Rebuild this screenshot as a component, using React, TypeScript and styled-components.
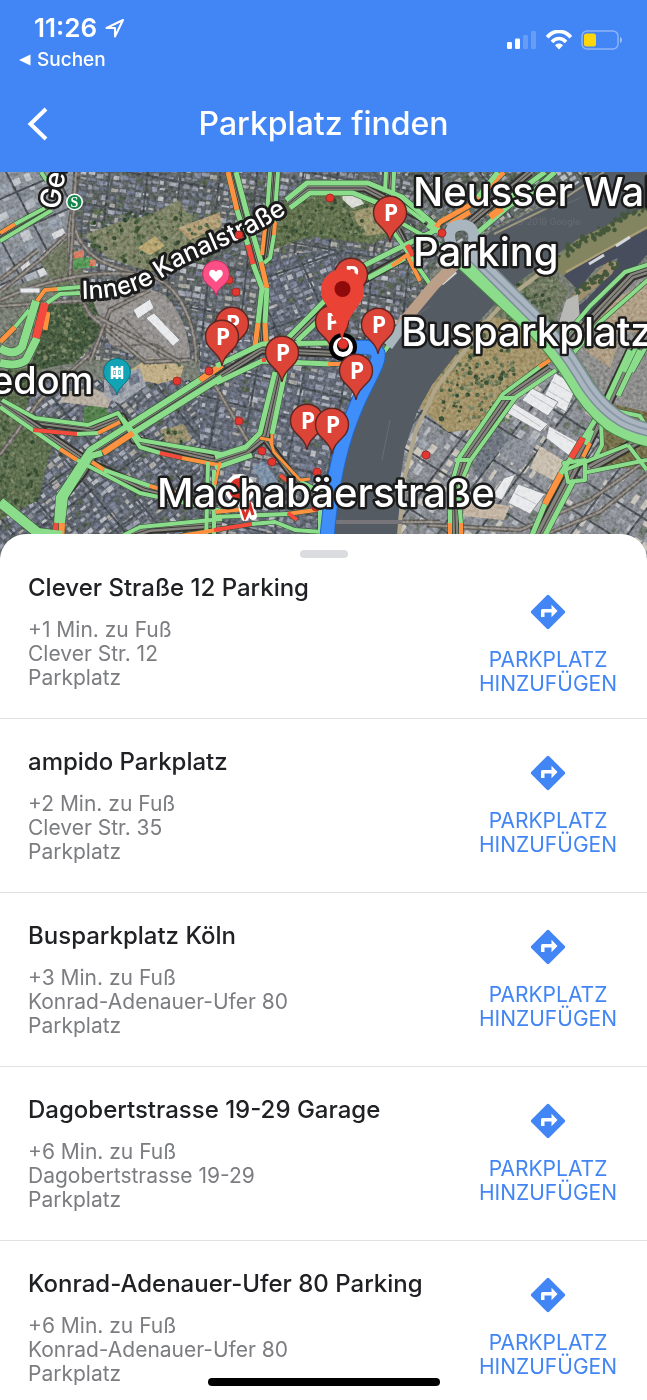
import React from "react";
import styled, { createGlobalStyle } from "styled-components";

const GlobalStyle = createGlobalStyle`
  *, *::before, *::after { box-sizing: border-box; }
  body {
    margin: 0;
    background: #ffffff;
    font-family: Inter, "Liberation Sans", sans-serif;
  }
`;

const Screen = styled.div`
  display: flex;
  flex-direction: column;
  height: 100vh;
  overflow: hidden;
  position: relative;
`;

const Header = styled.header`
  flex: none;
  background: #4285f4;
  color: #ffffff;
`;

const StatusBar = styled.div`
  display: flex;
  justify-content: space-between;
  height: 76px;
  padding: 12px 24px 0 19px;
`;

const StatusLeft = styled.div`
  display: flex;
  flex-direction: column;
  gap: 4px;
`;

const Clock = styled.div`
  display: flex;
  align-items: center;
  gap: 8px;
  padding-left: 15px;
  font-size: 26px;
  line-height: 32px;
  font-weight: 600;
`;

const ReturnLink = styled.a`
  display: flex;
  align-items: center;
  gap: 6px;
  color: inherit;
  font-size: 19px;
  line-height: 24px;
  font-weight: 500;
  text-decoration: none;
`;

const StatusRight = styled.div`
  display: flex;
  align-items: center;
  gap: 8px;
  height: 56px;
`;

const NavBar = styled.div`
  display: grid;
  grid-template-columns: 76px 1fr 76px;
  align-items: center;
  height: 96px;
`;

const BackButton = styled.button`
  display: flex;
  align-items: center;
  height: 56px;
  padding: 0 0 0 27px;
  border: 0;
  background: none;
  color: inherit;
`;

const Title = styled.h1`
  margin: 0;
  font-size: 32px;
  line-height: 40px;
  font-weight: 500;
  text-align: center;
`;

const MapArea = styled.div`
  flex: none;
  height: 388px;
  background: #6a6e70;

  svg {
    display: block;
    width: 100%;
    height: 100%;
  }
`;

const Sheet = styled.main`
  position: relative;
  display: flex;
  flex-direction: column;
  flex: 1;
  min-height: 0;
  margin-top: -26px;
  padding-top: 16px;
  border-radius: 26px 26px 0 0;
  background: #ffffff;
`;

const Handle = styled.div`
  flex: none;
  align-self: center;
  width: 48px;
  height: 8px;
  border-radius: 4px;
  background: #dadce0;
`;

const ResultList = styled.ul`
  flex: 1;
  min-height: 0;
  margin: 0;
  padding: 0;
  list-style: none;
  overflow-y: auto;
  scrollbar-width: none;
`;

const Result = styled.li`
  display: grid;
  grid-template-columns: 1fr 198px;
  border-bottom: 1px solid #dfe1e5;
`;

const Info = styled.div<{ $first: boolean }>`
  padding: ${(p) => (p.$first ? 15 : 28)}px 0 28px 28px;
`;

const Name = styled.h2`
  margin: 0 0 15px;
  color: #202124;
  font-size: 24px;
  line-height: 30px;
  font-weight: 500;
`;

const Detail = styled.p`
  margin: 0;
  color: #7c7d80;
  font-size: 21px;
  line-height: 24px;
`;

const AddButton = styled.button`
  display: flex;
  flex-direction: column;
  align-items: center;
  align-self: start;
  gap: 18px;
  padding: 36px 0 0;
  border: 0;
  background: none;
  color: #4285f4;
  font: inherit;
  font-size: 21px;
  line-height: 24px;
`;

const AddLabel = styled.span`
  width: 142px;
  text-align: center;
`;

const HomeIndicator = styled.div`
  position: absolute;
  bottom: 14px;
  left: 50%;
  width: 232px;
  height: 8px;
  margin-left: -116px;
  border-radius: 4px;
  background: #000000;
`;

const GREEN = "#8bdd8b";
const ORANGE = "#ff9140";
const RED = "#f44a3e";

function random(seed: number) {
  let s = seed;
  return () => {
    s = (s * 1664525 + 1013904223) % 4294967296;
    return s / 4294967296;
  };
}

type District = {
  id: string;
  area: string;
  centre: string;
  angle: number;
  cell: number;
  ground: string;
  roofs: string[];
};

const cityRoofs = ["#9297a8", "#a2a6b3", "#7d8397", "#8c909c", "#b9bbc2", "#737a90", "#56634f", "#aaa8a2"];
const districts: District[] = [
  { id: "nippes", area: "M60 160H430V360H60Z", centre: "245 265", angle: 8, cell: 7, ground: "#5f6567", roofs: cityRoofs },
  { id: "west", area: "M0 380H230V570H0Z", centre: "110 470", angle: -38, cell: 7, ground: "#5f656e", roofs: cityRoofs },
  { id: "centre", area: "M200 340H360V570H200Z", centre: "280 450", angle: 12, cell: 8, ground: "#636974", roofs: cityRoofs },
  { id: "agnes", area: "M265 255L345 250L345 345L265 345Z", centre: "305 300", angle: -22, cell: 7, ground: "#5f6570", roofs: cityRoofs },
  { id: "riehl", area: "M410 172H600L480 235L410 290Z", centre: "500 220", angle: -35, cell: 7, ground: "#616964", roofs: cityRoofs },
  { id: "ind", area: "M0 160H74L66 270L0 290Z", centre: "30 220", angle: -26, cell: 13, ground: "#8b9097", roofs: ["#b0b5bd", "#c2c6cc", "#98a1ac", "#d8dadc", "#838a92"] },
  { id: "east", area: "M395 340H660V570H395Z", centre: "530 450", angle: -56, cell: 11, ground: "#888c92", roofs: ["#a1a5ad", "#b6b9be", "#9296 9d".replace(" ", ""), "#717b73", "#cac6bc"] },
];

function DistrictBlocks({ d, seed }: { d: District; seed: number }) {
  const next = random(seed);
  const items: React.ReactElement[] = [];
  const reach = 240;
  for (let x = -reach; x < reach; x += d.cell + 1) {
    for (let y = -reach; y < reach; y += d.cell) {
      const w = d.cell * (0.4 + next() * 0.7);
      const h = d.cell * (0.25 + next() * 0.5);
      const fill = d.roofs[Math.floor(next() * d.roofs.length)];
      items.push(
        <rect key={`${x}:${y}`} x={(x + next() * 2).toFixed(1)} y={(y + next() * 2).toFixed(1)} width={w.toFixed(1)} height={h.toFixed(1)} fill={fill} />
      );
    }
  }
  const streets = Array.from({ length: 13 }, (_, i) => -reach + i * 39 + Math.floor(next() * 12));
  return (
    <g clipPath={`url(#clip-${d.id})`}>
      <path d={d.area} fill={d.ground} />
      <g transform={`translate(${d.centre}) rotate(${d.angle})`}>
        {items}
        {streets.map((s) => (
          <path key={s} d={`M${s} -240L${s + 14} 240M-240 ${s}L240 ${s + 22}`} stroke="#4b5156" strokeWidth="2" />
        ))}
      </g>
    </g>
  );
}

type Park = { d: string; fill: string; box: [number, number, number, number]; n: number };

const parks: Park[] = [
  { d: "M84 235L118 222L150 215L178 200L196 225L222 222L218 250L190 262L150 272L108 258Z", fill: "#7f8468", box: [90, 212, 124, 50], n: 190 },
  { d: "M178 228L220 212L222 226L190 240Z", fill: "#b39f78", box: [178, 212, 44, 28], n: 12 },
  { d: "M138 248L155 236L165 246L150 255Z", fill: "#baa773", box: [138, 236, 24, 18], n: 3 },
  { d: "M46 302L92 298L104 330L76 362L28 372L40 340Z", fill: "#465b40", box: [36, 300, 58, 64], n: 190 },
  { d: "M0 372L40 366L26 410L0 398Z", fill: "#5d6e4f", box: [0, 370, 30, 30], n: 60 },
  { d: "M0 408L52 446L38 500L0 520Z", fill: "#5f7050", box: [0, 418, 40, 86], n: 130 },
  { d: "M284 200L312 192L375 196L396 232L372 244L310 236L272 250Z", fill: "#62714d", box: [284, 198, 96, 40], n: 180 },
  { d: "M350 212L376 206L392 232L366 236Z", fill: "#9f9770", box: [350, 208, 36, 26], n: 24 },
  { d: "M130 370L150 358L184 366L180 378L158 384L140 380Z", fill: "#c0ae86", box: [134, 362, 46, 18], n: 6 },
  { d: "M160 430L184 424L192 440L168 446Z", fill: "#9c9170", box: [162, 428, 26, 14], n: 14 },
  { d: "M443 355L472 325L510 310L555 355L512 385L492 428L448 432L420 408Z", fill: "#a4946a", box: [440, 330, 76, 92], n: 200 },
  { d: "M508 288L546 262L568 292L548 332L510 320L488 316Z", fill: "#717962", box: [506, 280, 50, 42], n: 90 },
];

const island: Park = { d: "M660 200L576 240L550 264L562 276L600 254L660 222Z", fill: "#828560", box: [560, 212, 0, 0], n: 0 };

function ParkArea({ park, seed }: { park: Park; seed: number }) {
  const next = random(seed);
  const [x, y, w, h] = park.box;
  const greens = ["#3a5136", "#485d3e", "#5a6d4d", "#7c8666", "#647553"];
  return (
    <g>
      <path d={park.d} fill={park.fill} />
      {Array.from({ length: park.n }, (_, i) => (
        <circle key={i} cx={(x + next() * w).toFixed(1)} cy={(y + next() * h).toFixed(1)} r={(0.8 + next() * 1.7).toFixed(1)} fill={greens[Math.floor(next() * 5)]} />
      ))}
    </g>
  );
}

/* Rows of trees along a straight bank. */
function TreeRow({ from, to, spread, n, seed }: { from: [number, number]; to: [number, number]; spread: number; n: number; seed: number }) {
  const next = random(seed);
  return (
    <g fill="#45583b">
      {Array.from({ length: n }, (_, i) => {
        const t = next();
        const x = from[0] + (to[0] - from[0]) * t + (next() - 0.5) * spread;
        const y = from[1] + (to[1] - from[1]) * t + (next() - 0.5) * spread;
        return <circle key={i} cx={x.toFixed(1)} cy={y.toFixed(1)} r={(1.2 + next() * 1.4).toFixed(1)} />;
      })}
    </g>
  );
}

const rails = [
  "M78 172L69 230L70 275L90 315L145 362L190 360",
  "M74 225C82 262 120 270 150 276C178 284 196 320 196 362",
  "M0 292L40 260L66 235",
  "M0 300C50 278 100 268 150 276",
  "M0 306L90 300",
  "M0 455L40 400L100 345",
  "M90 362L110 310L150 290",
  "M96 316L180 362",
  "M215 385L250 445",
  "M427 525L520 530L590 500L647 460",
  "M520 545L600 512L647 474",
  "M332 522H440",
  "M0 280L38 250M70 275L76 172",
];

/* Wide carriageways that lie between the coloured traffic lines. */
const carriageways: [string, number][] = [
  ["M0 237L50 208", 5],
  ["M232 172L256 262L264 292L260 346", 5],
  ["M274 172L270 230L266 262", 5],
  ["M288 204L308 188H365L430 222", 7],
  ["M292 342L345 290L435 240", 7],
  ["M0 402L38 422L92 429L122 417L134 440L218 460", 7],
  ["M0 402L90 463L144 488L218 506", 7],
  ["M222 372L96 452L82 474L61 500L58 540", 7],
  ["M125 537L150 529L222 524", 8],
  ["M217 378L262 350L345 354", 7],
  ["M280 372L266 436L246 452L215 462", 8],
  ["M266 440L300 486L322 500", 6],
  ["M560 356L595 315L632 276L650 270", 8],
  ["M550 368L509 396L464 460L454 490L456 545", 8],
  ["M632 350L600 418L570 476L534 545", 10],
  ["M390 172L388 195", 6],
  ["M470 222L530 172", 7],
  ["M590 468L640 440", 9],
  ["M640 340L624 372", 6],
  ["M398 230L420 272", 6],
];

const traffic: [string, string, number][] = [
  ["M0 241L52 210", GREEN, 4],
  ["M0 233L15 224", ORANGE, 4],
  ["M15 224L45 208M41 172L47 181", GREEN, 4],
  ["M37 301L45 290L57 289", ORANGE, 4],
  ["M57 289L80 287M47 303L60 294L80 293", GREEN, 4],
  ["M0 342L15 327", ORANGE, 5],
  ["M15 327L29 310", GREEN, 4],
  ["M48 312L45 330", ORANGE, 5],
  ["M36 301L22 347Q14 357 0 348M37 338L26 360Q18 367 0 363", GREEN, 8],
  ["M45 303L36 338", RED, 8],
  ["M2 400L35 418L88 425L118 413L127 427L140 447L160 453", GREEN, 4],
  ["M160 453L182 458", RED, 4],
  ["M182 458L218 465", ORANGE, 4],
  ["M122 418L140 440L222 454M0 407L60 449", GREEN, 4],
  ["M60 449L77 460M92 462L104 470", ORANGE, 4],
  ["M104 470L150 486M77 460L140 493L222 511", GREEN, 4],
  ["M150 486L182 495", ORANGE, 4],
  ["M33 430L77 434", RED, 4],
  ["M77 434L98 433", GREEN, 4],
  ["M98 433L120 422", ORANGE, 4],
  ["M200 380L90 450L78 468L59 497L57 523M222 377L133 433M102 453L91 456L65 497L62 523", GREEN, 6],
  ["M222 365L200 380M133 433L103 453M62 523L61 545", ORANGE, 6],
  ["M56 523L54 545", RED, 5],
  ["M0 502L38 533L62 536", GREEN, 10],
  ["M122 536L140 527L222 519M208 462L206 545M214 470L214 545", GREEN, 4],
  ["M180 536L222 529M215 512L255 508M287 514L316 510", ORANGE, 4],
  ["M214 530L252 524", RED, 4],
  ["M228 172L237 210M261 262L267 288M258 323L255 347M265 323L266 342", ORANGE, 5],
  ["M237 210L248 245M253 264L262 288L258 323M236 172L246 210L261 262M267 288L265 323", GREEN, 5],
  ["M248 245L253 264", RED, 5],
  ["M270 172L267 215M278 172L274 225M274 235L270 258L264 263", GREEN, 4],
  ["M265 228L262 255M275 222L274 235", ORANGE, 4],
  ["M286 200L307 183H368L402 197L438 228M290 208L310 193H353L378 203", GREEN, 5],
  ["M386 172L385 192M394 172L393 198L425 222", GREEN, 4],
  ["M288 338L355 270L395 250L440 228M297 341L342 298M368 278L405 258", GREEN, 5],
  ["M390 227L430 284M396 220L440 245", GREEN, 4],
  ["M392 266L407 255L420 281", ORANGE, 4],
  ["M407 245L413 256", RED, 5],
  ["M216 366L262 344L330 343M216 383L262 361L330 364", GREEN, 5],
  ["M328 343H346M328 364H346", ORANGE, 4],
  ["M275 372L260 433L246 447L215 457M285 372L272 434M215 468L252 455M300 482L322 493", GREEN, 5],
  ["M260 438L270 440L274 452L300 480L310 479M272 434V446M220 462L215 485", ORANGE, 3],
  ["M280 475L291 484M288 513L297 520M262 360L266 360", RED, 4],
  ["M215 517L287 514M252 524L275 522L295 530L322 532M320 510V532", GREEN, 4],
  ["M434 230L440 222L470 205L504 172M450 224L470 212", ORANGE, 5],
  ["M478 197L498 172M475 235L510 205L535 190L555 172M427 225L445 235M500 205L545 172", GREEN, 5],
  ["M490 217L502 208", ORANGE, 7],
  ["M384 352L427 292L470 256", GREEN, 4],
  ["M553 350L590 306L625 272L650 264M566 362L600 322L650 278", GREEN, 4],
  ["M624 372L637 345M632 372L647 345", GREEN, 4],
  ["M633 345L640 332", ORANGE, 4],
  ["M545 363L503 394L459 458L450 490V523M556 370L516 397L470 461L458 490L461 523M455 460H471M500 398H516", GREEN, 4],
  ["M539 367L550 360M450 523V545M461 523V545", ORANGE, 4],
  ["M630 350L605 404L584 438M571 458L560 475M545 504L528 545M640 350L618 396M592 430L586 445M574 480L540 545", GREEN, 5],
  ["M583 438L571 458", RED, 6],
  ["M561 474L545 504", ORANGE, 6],
  ["M590 443L583 457", ORANGE, 4],
  ["M564 463L585 460V480L568 482ZM560 472L600 456L628 445M583 473L647 460M612 410L640 416L647 428M601 420L602 445L595 458M628 445L647 470", GREEN, 4],
];

const halls = [
  "M555 373L577 386L566 412L543 398Z",
  "M532 388L558 402L548 416L522 400Z",
  "M512 402L548 424L540 432L507 413Z",
  "M549 426L578 442L572 458L546 438Z",
  "M504 478L516 474L502 500L492 496Z",
  "M518 484L545 494L530 514L508 503Z",
  "M133 310L150 299L154 308L138 319Z",
  "M146 318L154 313L180 340L173 346Z",
  "M20 288L40 288V293H20Z",
];

const pins: [number, number][] = [
  [390, 213], [351, 275], [332, 322], [378, 325], [232, 324], [222, 337], [282, 353], [356, 371], [307, 421], [332, 425],
];

const incidents: [number, number][] = [
  [330, 198], [239, 235], [229, 280], [236, 292], [177, 381], [209, 371], [239, 421],
  [262, 451], [272, 462], [317, 472], [316, 507], [426, 455], [442, 233],
];

function ParkingPin({ x, y }: { x: number; y: number }) {
  return (
    <g transform={`translate(${x} ${y})`}>
      <path d="M0 29C-1 22 -5 18 -11 12A16.500 16.500 0 1 1 11 12C5 18 1 22 0 29Z" fill="#db4437" stroke="#5a2723" strokeWidth="1.400" />
      <text x="1" y="8" textAnchor="middle" fontSize="23" fontWeight="700" fill="#ffffff" fontFamily="Open Sans, sans-serif">P</text>
    </g>
  );
}

const labelStyle = {
  fill: "#ffffff",
  stroke: "#1b1b1b",
  strokeWidth: 5,
  strokeLinejoin: "round" as const,
  paintOrder: "stroke",
  fontWeight: 500,
  fontSize: 40,
};

const expressway = "L538 320Q563 346 580 374Q596 402 616 416Q630 427 660 432";

function SatelliteMap() {
  return (
    <svg viewBox="0 172 647 388" preserveAspectRatio="xMidYMin slice" role="img" aria-label="Karte mit Parkplätzen in Köln">
      <defs>
        {districts.map((d) => (
          <clipPath key={d.id} id={`clip-${d.id}`}>
            <path d={d.area} />
          </clipPath>
        ))}
        <filter id="grain" x="0" y="0" width="100%" height="100%" colorInterpolationFilters="sRGB">
          <feTurbulence type="fractalNoise" baseFrequency="0.3" numOctaves="3" seed="4" />
          <feColorMatrix values="1.4 1 0 0 -0.7  1.4 1 0 0 -0.7  1.4 1 0 0 -0.7  0 0 0 0 1" />
        </filter>
        <path id="kanalstrasse" d="M82 299C135 298 150 286 178 267C215 248 250 240 308 199" />
      </defs>

      <rect y="172" width="647" height="388" fill="#7a7f76" />
      {districts.map((d, i) => (
        <DistrictBlocks key={d.id} d={d} seed={i * 91 + 7} />
      ))}
      <path d="M560 330L647 262V420L600 400Z" fill="#8f8f8e" />
      <path d="M590 315L647 280V330L610 335ZM585 350L620 340L610 368Z" fill="#b0a087" />
      <path d="M78 252L92 305L60 292L40 262L66 240Z" fill="#707862" />
      <path d="M92 302C112 290 150 284 166 296C184 316 190 340 190 362L150 364L110 344Z" fill="#96928f" />
      <path d="M100 322L130 296M104 334L124 318L165 362M112 346C140 350 160 330 172 364" stroke="#716d6b" strokeWidth="2" fill="none" />
      {parks.map((park, i) => (
        <ParkArea key={i} park={park} seed={i * 37 + 11} />
      ))}
      <path d="M72 258L96 257V267L72 269Z" fill="#5a9a5a" />
      <path d="M74 252L84 250V257L73 259ZM90 260L96 259V266H90Z" fill="#d67d64" />
      <path d="M84 407L106 404L110 420L84 424Z" fill="#55804e" />
      <path d="M64 392L92 388L112 396L108 408L60 402Z" fill="#b9b0a3" />
      <path d="M104 380L140 368L146 386L120 404L104 396Z" fill="#a0a5ad" />
      <path d="M108 384L122 380L124 392L112 396ZM128 376L138 372L140 382L130 386Z" fill="#737b8c" />

      <path d="M603 402L647 412V470L600 466Z" fill="#77704b" />
      {rails.map((d) => (
        <g key={d} fill="none">
          <path d={d} stroke="#67635f" strokeWidth="5" />
          <path d={d} stroke="#959089" strokeWidth="2" />
        </g>
      ))}
      <path d="M343 200C340 194 348 190 358 195L364 204L352 208Z" fill="#dcdcd8" />
      <path d="M252 467L264 461L285 492L272 498Z" fill="#7e92a8" />
      <path d="M502 432L535 446L522 470L496 450Z" fill="#8c9098" />
      <path d="M540 446L566 462L556 482L530 468Z" fill="#c9bfb0" />
      <path d="M468 500L510 506L504 520L462 516Z" fill="#c4b5a4" />
      <path d="M480 430L495 424L508 440L478 478L474 470Z" fill="#707680" />
      {halls.map((d) => (
        <path key={d} d={d} fill="#e9eaec" stroke="#8d9095" />
      ))}
      <path d="M551 381L572 393M547 390L569 403M530 394L553 408M512 408L541 427M555 432L574 443M514 493L536 504" stroke="#c2c5c9" />

      <rect y="172" width="647" height="388" filter="url(#grain)" opacity="0.400" style={{ mixBlendMode: "soft-light" }} />

      <path d="M600 168L555 200L490 232L462 262L432 294L408 325L384 350L370 392L352 436L338 480L332 570H397L400 480L405 448L417 412L432 385L458 352L480 320L508 290L548 260L575 242L660 200V168Z" fill="#555b62" />
      <path d="M660 205L576 246L508 298L486 322L462 354L436 388L416 430L404 480L399 535" fill="none" stroke="#b0a68b" strokeWidth="4" />
      <path d="M604 172L556 204L494 234" fill="none" stroke="#9c997f" strokeWidth="2" />
      <path d="M660 222L604 252L580 258L564 276L578 290L596 268L618 258L612 272L586 300L570 312L584 322L604 306L628 276L660 240Z" fill="#474d5c" />
      <ParkArea park={island} seed={5} />
      <TreeRow from={[647, 206]} to={[560, 254]} spread={9} n={80} seed={21} />
      <path d="M572 296L608 262L618 262L612 274L574 306Z" fill="#9d8e6f" />
      <TreeRow from={[580, 292]} to={[616, 264]} spread={8} n={34} seed={8} />
      <path d="M566 300L578 294L580 320L558 326Z" fill="#b8b8b6" />
      <path d="M660 220L566 272" stroke="#ac9f75" strokeWidth="2" />
      <path d="M589 264L604 255M616 246L630 237M442 284L456 272" stroke="#d3d7db" strokeWidth="3" />
      <path d="M552 210L580 198M395 330L430 306M382 460L390 420" stroke="#686e75" />
      <path d="M332 522H402" stroke="#77757a" strokeWidth="4" />
      <text x="516" y="225" fontSize="9" fill="#777d82" opacity="0.500">© 2019 Google</text>

      {carriageways.map(([d, w]) => (
        <g key={d} fill="none" strokeLinejoin="round">
          <path d={d} stroke="#34322e" strokeWidth={w + 2} />
          <path d={d} stroke="#85837d" strokeWidth={w - 2} />
          <path d={d} stroke="#3b3a37" strokeWidth="1" />
        </g>
      ))}
      {traffic.map(([d, , w]) => (
        <path key={d} d={d} fill="none" stroke="#315332" strokeWidth={w + 1} strokeLinejoin="round" />
      ))}
      {traffic.map(([d, color, w]) => (
        <path key={d} d={d} fill="none" stroke={color} strokeWidth={w} strokeLinejoin="round" />
      ))}

      <g fill="none" strokeLinejoin="round">
        <path d="M400 326L435 284L462 258" stroke="#bb9f89" strokeWidth="11" />
        <path d="M388 346L408 318" stroke="#a9b6bd" strokeWidth="10" />
        <path d="M462 256L538 327Q560 350 576 376Q592 404 612 420Q630 432 660 438" stroke="#468348" strokeWidth="24" />
        <path d="M462 256L538 327Q560 350 576 376Q592 404 612 420Q630 432 660 438" stroke={GREEN} strokeWidth="22" />
        <path d={`M470 252${expressway}`} stroke="#7f8d98" strokeWidth="14" />
        <path d={`M453 248C445 232 452 225 462 225C476 225 476 240 470 252${expressway}`} stroke="#a9b6bf" strokeWidth="11" />
        <path d={`M480 264${expressway}`} stroke="#8c98a9" strokeWidth="2" />
        <path d="M342 352C360 345 374 346 378 353C380 362 370 376 358 402C342 438 331 480 326 550" stroke="#2167c9" strokeWidth="15" />
        <path d="M342 352C360 345 374 346 378 353C380 362 370 376 358 402C342 438 331 480 326 550" stroke="#3f8efa" strokeWidth="13" />
      </g>

      <text {...labelStyle} fontSize={25} strokeWidth={6}>
        <textPath href="#kanalstrasse">Innere Kanalstraße</textPath>
      </text>
      <text {...labelStyle} fontSize={28} transform="translate(59 210) rotate(-80)">Ger</text>
      <text {...labelStyle} fontSize={38} x="-9" y="394">edom</text>

      {incidents.map(([x, y]) => (
        <circle key={`${x}-${y}`} cx={x} cy={y} r="4" fill="#e2362f" stroke="#a52c27" />
      ))}

      <circle cx="74.500" cy="202" r="8.500" fill="#ffffff" />
      <circle cx="74.500" cy="202" r="7" fill="#16864a" />
      <text x="74.500" y="207" fontSize="14" fontWeight="700" textAnchor="middle" fill="#ffffff" fontFamily="Liberation Serif, serif">S</text>

      <g>
        <path d="M216 296C215 291 212 288 207 284A13.500 13.500 0 1 1 225 284C220 288 217 291 216 296Z" fill="#fb4f85" stroke="#b3325c" />
        <path d="M216 282L210 276C207 271 213 267 216 272C219 267 225 271 222 276Z" fill="#ffffff" />
      </g>
      <g>
        <path d="M117 395C116 390 113 387 108 382A13.500 13.500 0 1 1 126 382C121 387 118 390 117 395Z" fill="#12a4b4" stroke="#0d7280" />
        <path d="M112 366V379M117 366V379M122 366V379M111 369H123M111 376H123" stroke="#ffffff" strokeWidth="2.500" />
        <path d="M114.500 371V374M119.500 371V374" stroke="#ffffff" strokeWidth="1.500" />
      </g>

      {pins.slice(0, 6).map(([x, y]) => (
        <ParkingPin key={`${x}-${y}`} x={x} y={y} />
      ))}
      <circle cx="343" cy="347" r="14" fill="#000000" />
      <circle cx="343" cy="347" r="10" fill="#ffffff" />
      <circle cx="343" cy="346" r="6" fill="#000000" />
      <path d="M342 344C340 325 334 317 325 303A21.500 21.500 0 1 1 360 303C350 317 344 325 342 344Z" fill="#ea4335" />
      <circle cx="342.500" cy="289" r="8" fill="#8f0b0b" />
      <circle cx="343" cy="344" r="5" fill="#e2362f" stroke="#a52c27" />
      {pins.slice(6).map(([x, y]) => (
        <ParkingPin key={`${x}-${y}`} x={x} y={y} />
      ))}

      <circle cx="240" cy="489" r="13" fill="#d93025" stroke="#ffffff" strokeWidth="4" />
      <path d="M242 505L245 517L250 506L253 516" fill="none" stroke="#ffffff" strokeWidth="8" strokeLinecap="round" strokeLinejoin="round" />
      <path d="M241 505L245 517L250 505L253 515" fill="none" stroke="#d93025" strokeWidth="3" />

      <text {...labelStyle} x="413" y="206">Neusser Wall</text>
      <text {...labelStyle} x="413" y="266">Parking</text>
      <text {...labelStyle} x="401" y="346">Busparkplatz</text>
      <text {...labelStyle} x="157" y="507">Machabäerstraße</text>
    </svg>
  );
}

function LocationIcon() {
  return (
    <svg width="20" height="20" viewBox="0 0 20 20" fill="none" aria-hidden="true">
      <path d="M18 2L1.500 10H10V18.500Z" stroke="#ffffff" strokeWidth="2" strokeLinejoin="round" />
    </svg>
  );
}

function SignalIcons() {
  return (
    <StatusRight>
      <svg width="30" height="20" viewBox="0 0 30 20" fill="#ffffff" aria-hidden="true">
        <rect x="0" y="12" width="5" height="7" rx="1.200" />
        <rect x="8" y="8.500" width="5" height="10.500" rx="1.200" />
        <rect x="16" y="5" width="5" height="14" rx="1.200" opacity="0.200" />
        <rect x="24" y="1" width="5" height="18" rx="1.200" opacity="0.200" />
      </svg>
      <svg width="28" height="20" viewBox="0 0 28 20" fill="none" stroke="#ffffff" aria-hidden="true">
        <path d="M2.200 7.200C9 -0.500 19 -0.500 25.800 7.200" strokeWidth="3.800" />
        <path d="M7 12C11 7.400 17 7.400 21 12" strokeWidth="3.600" />
        <path d="M14 19.500L10 15.200C12 13 16 13 18 15.200Z" fill="#ffffff" stroke="none" />
      </svg>
      <svg width="42" height="20" viewBox="0 0 42 20" fill="none" aria-hidden="true">
        <rect x="1" y="1" width="36" height="18" rx="5" stroke="#ffffff" strokeOpacity="0.400" strokeWidth="1.500" />
        <path d="M39 7C41.500 8 41.500 12 39 13Z" fill="#ffffff" opacity="0.500" />
        <rect x="3" y="3.500" width="12" height="13" rx="2.500" fill="#ffd60a" />
      </svg>
    </StatusRight>
  );
}

function DirectionsIcon() {
  return (
    <svg width="36" height="36" viewBox="0 0 36 36" aria-hidden="true">
      <path d="M16.900 1.200Q18 0.300 19.100 1.200L34.800 16.900Q35.700 18 34.800 19.100L19.100 34.800Q18 35.700 16.900 34.800L1.200 19.100Q0.300 18 1.200 16.900Z" fill="#4285f4" />
      <path d="M11 23V16.500Q11 15 12.500 15H21.500V10.800L27.500 17L21.500 23.200V18.500H14.500V23Z" fill="#ffffff" />
    </svg>
  );
}

const results = [
  { name: "Clever Straße 12 Parking", walk: "+1 Min. zu Fuß", street: "Clever Str. 12" },
  { name: "ampido Parkplatz", walk: "+2 Min. zu Fuß", street: "Clever Str. 35" },
  { name: "Busparkplatz Köln", walk: "+3 Min. zu Fuß", street: "Konrad-Adenauer-Ufer 80" },
  { name: "Dagobertstrasse 19-29 Garage", walk: "+6 Min. zu Fuß", street: "Dagobertstrasse 19-29" },
  { name: "Konrad-Adenauer-Ufer 80 Parking", walk: "+6 Min. zu Fuß", street: "Konrad-Adenauer-Ufer 80" },
];

export default function App() {
  return (
    <Screen>
      <GlobalStyle />
      <Header>
        <StatusBar>
          <StatusLeft>
            <Clock>
              11:26
              <LocationIcon />
            </Clock>
            <ReturnLink href="#suchen">
              <svg width="12" height="12" viewBox="0 0 12 12" aria-hidden="true">
                <path d="M11.500 0.500V11.500L0 6Z" fill="#ffffff" />
              </svg>
              Suchen
            </ReturnLink>
          </StatusLeft>
          <SignalIcons />
        </StatusBar>
        <NavBar>
          <BackButton type="button" aria-label="Zurück">
            <svg width="22" height="34" viewBox="0 0 22 34" fill="none" aria-hidden="true">
              <path d="M19 2L3.500 17L19 32" stroke="#ffffff" strokeWidth="4" />
            </svg>
          </BackButton>
          <Title>Parkplatz finden</Title>
        </NavBar>
      </Header>
      <MapArea>
        <SatelliteMap />
      </MapArea>
      <Sheet>
        <Handle />
        <ResultList>
          {results.map((r, i) => (
            <Result key={r.name}>
              <Info $first={i === 0}>
                <Name>{r.name}</Name>
                <Detail>{r.walk}</Detail>
                <Detail>{r.street}</Detail>
                <Detail>Parkplatz</Detail>
              </Info>
              <AddButton type="button">
                <DirectionsIcon />
                <AddLabel>PARKPLATZ HINZUFÜGEN</AddLabel>
              </AddButton>
            </Result>
          ))}
        </ResultList>
      </Sheet>
      <HomeIndicator />
    </Screen>
  );
}
